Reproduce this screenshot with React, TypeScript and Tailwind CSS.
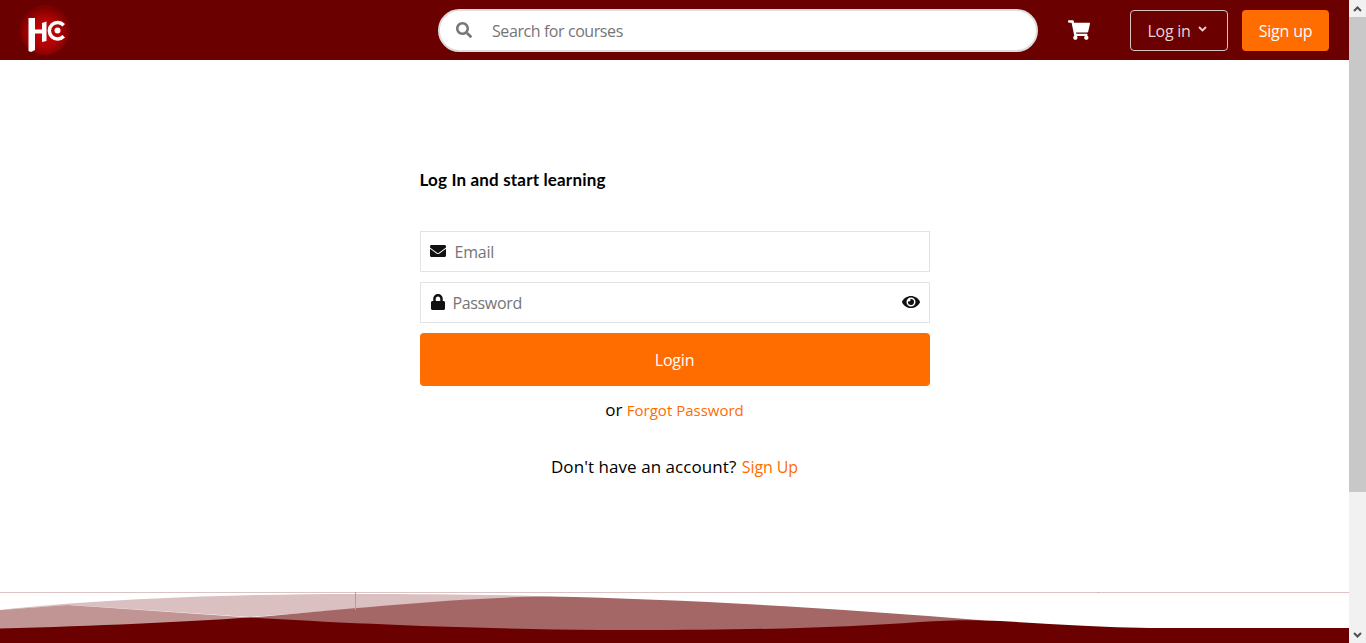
import { FaEnvelope, FaEye, FaLock, FaSearch, FaShoppingCart } from 'react-icons/fa';

function Logo() {
  return (
    <svg width="50" height="50" viewBox="20 5 50 50" className="shrink-0">
      <defs>
        <radialGradient id="logoGlow" cx="50%" cy="55%" r="50%">
          <stop offset="0%" stopColor="#d80000" />
          <stop offset="60%" stopColor="#ac0404" />
          <stop offset="100%" stopColor="#7c0000" />
        </radialGradient>
      </defs>
      <circle cx="45" cy="30" r="25" fill="url(#logoGlow)" />
      <path d="M28.500 18 L35 18 L35 29.500 L42 29.500 L42 23 L46.500 21.500 L46.500 41 L42 42 L42 33.500 L35 33.500 L35 50 L31 52 L28.500 51 Z" fill="#fff" />
      <path d="M65 24 A10 10 0 1 0 65 37.500 L62.500 35 A6.500 6.500 0 1 1 62.500 26.500 Z" fill="#fff" />
      <circle cx="57.500" cy="30.500" r="3" fill="#fff" />
    </svg>
  );
}

function Wave() {
  return (
    <svg viewBox="0 592 1349 51" className="block h-[51px] w-[1349px]">
      <rect x="0" y="592" width="1349" height="51" fill="#fff" />
      <rect x="0" y="592" width="1349" height="1" fill="#dcc4c4" />
      <path d="M0 610 C90 600 220 594 355 594 C430 594 510 594.500 555 597 L355 609 L250 617 L70 605 Z" fill="#dac0c0" />
      <path d="M0 610 L68 605 L250 617.500 L250 625 L0 632 Z" fill="#c29595" />
      <path d="M250 617.500 C350 609 460 597 550 596.500 C680 599 830 608 985 620.500 L920 626 C820 632 690 632 600 632 C480 632 380 625 250 620 Z" fill="#a56666" />
      <path d="M0 628.500 C100 626 180 622 250 617.500 C340 623 470 629 600 630 C740 630.500 840 628 920 622 C950 620 975 619.500 1000 621 C1050 624 1100 627.500 1150 628 L1349 628 L1349 643 L0 643 Z" fill="#6b0000" />
      <rect x="355" y="592" width="1" height="18" fill="#b79a9a" />
      <rect x="1098" y="592" width="1" height="1" fill="#c0a8a8" />
    </svg>
  );
}

function Scrollbar() {
  return (
    <div className="flex h-[643px] w-[17px] shrink-0 flex-col bg-[#f1f1f1]">
      <div className="flex h-[17px] items-center justify-center">
        <svg width="9" height="6" viewBox="0 0 9 6">
          <path d="M1 5 L4.500 1.500 L8 5" fill="none" stroke="#505050" strokeWidth="2" />
        </svg>
      </div>
      <div className="h-[475px] bg-[#c8c8c8]" />
      <div className="flex-1" />
      <div className="flex h-[17px] items-center justify-center">
        <svg width="9" height="6" viewBox="0 0 9 6">
          <path d="M1 1 L4.500 4.500 L8 1" fill="none" stroke="#505050" strokeWidth="2" />
        </svg>
      </div>
    </div>
  );
}

export default function App() {
  return (
    <div className="flex h-[643px] overflow-hidden bg-white font-['Open_Sans',sans-serif]">
      <div className="flex w-[1349px] flex-col">
        <header className="flex h-[60px] shrink-0 items-center bg-[#6b0000] pl-5">
          <Logo />
          <div className="ml-[368px] flex h-[43px] w-[600px] items-center rounded-full border-2 border-[#dddddd] bg-white">
            <FaSearch className="ml-4 text-[16px] text-[#777777]" />
            <input
              className="mt-[2px] ml-5 flex-1 bg-transparent text-[16px] tracking-[-0.42px] outline-none placeholder:text-[#757575]"
              placeholder="Search for courses"
            />
          </div>
          <FaShoppingCart className="ml-[30px] text-[22px] text-white" />
          <button className="ml-[40px] flex h-[41px] w-[98px] items-center justify-center gap-[8px] rounded border border-[#d9c4c4] pt-[2px] pr-[3px] text-[16px] tracking-[-0.3px] text-[#e6d5d5]">
            Log in
            <svg width="9" height="6" viewBox="0 0 9 6" className="mb-[5px]">
              <path d="M1 1 L4.500 4.500 L8 1" fill="none" stroke="#e6d5d5" strokeWidth="1.800" />
            </svg>
          </button>
          <button className="ml-[14px] h-[41px] w-[87px] rounded bg-[#ff6c00] pt-[2px] text-[16px] tracking-[-0.2px] text-white">
            Sign up
          </button>
        </header>

        <main className="mx-auto w-[510px] flex-1 pt-[110px]">
          <h1 className="font-['Lato',sans-serif] text-[17px] leading-5 font-bold tracking-[0.17px] text-black">
            Log In and start learning
          </h1>
          <div className="mt-[41px] flex h-[41px] items-center border border-[#e3e3e3] pl-[9px]">
            <FaEnvelope className="mb-[2px] text-[16px] text-[#111111]" />
            <input
              className="ml-[9px] flex-1 text-[16px] tracking-[-0.2px] outline-none placeholder:text-[#757575]"
              placeholder="Email"
            />
          </div>
          <div className="mt-[10px] flex h-[41px] items-center border border-[#e3e3e3] pr-[9px] pl-[9px]">
            <FaLock className="mb-[1px] text-[16px] text-[#111111]" />
            <input
              className="ml-[7px] flex-1 text-[16px] tracking-[-0.35px] outline-none placeholder:text-[#757575]"
              placeholder="Password"
            />
            <FaEye className="mb-[2px] text-[18px] text-[#111111]" />
          </div>
          <button className="mt-[10px] h-[53px] w-full rounded bg-[#ff6c00] text-[16px] font-medium tracking-[-0.2px] text-white">
            Login
          </button>
          <p className="mt-[13px] text-center text-[17px] leading-[22px] text-black">
            or <a className="text-[15px] text-[#ff6c00]">Forgot Password</a>
          </p>
          <p className="mt-[34px] text-center text-[17px] leading-[23px] tracking-[0.06px] text-black">
            Don't have an account? <a className="ml-[1px] text-[16px] tracking-[-0.1px] text-[#ff6c00]">Sign Up</a>
          </p>
        </main>

        <Wave />
      </div>
      <Scrollbar />
    </div>
  );
}
